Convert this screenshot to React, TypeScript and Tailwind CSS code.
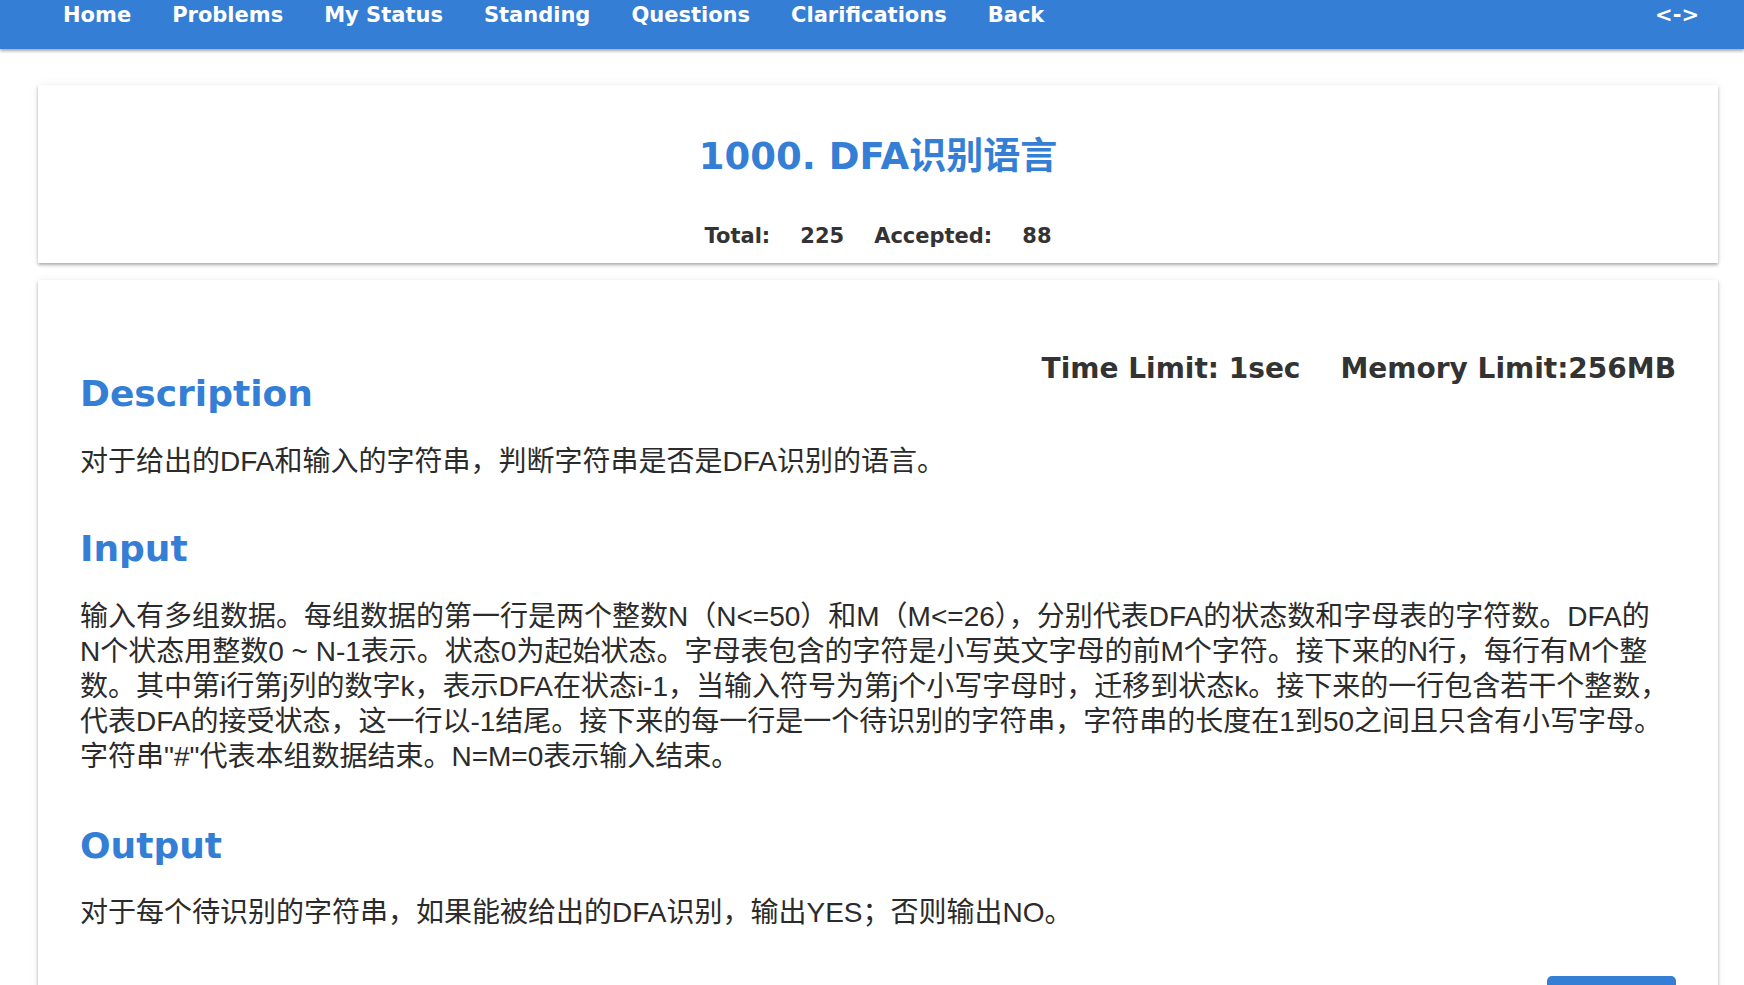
const navItems = ["Home", "Problems", "My Status", "Standing", "Questions", "Clarifications", "Back"];

const heading = "font-['DejaVu_Sans','Noto_Sans_CJK_SC',sans-serif] font-bold text-[36px] leading-[44px] text-[#347ed5]";
const body = "font-['Liberation_Sans','Noto_Sans_CJK_SC',sans-serif] text-[28px] leading-[35px] text-[#2b2b2b]";

function NavBar() {
  return (
    <nav className="h-[49px] bg-[#347ed5] shadow-[0_2px_3px_rgba(0,0,0,0.35)] flex justify-between items-start pt-[3px] pl-[63px] pr-[45px] font-['DejaVu_Sans',sans-serif] font-bold text-[21px] leading-[25px] text-white relative z-10">
      <div className="flex gap-[41px]">
        {navItems.map((item) => (
          <a key={item} href="#" className="no-underline">
            {item}
          </a>
        ))}
      </div>
      <a href="#">&lt;-&gt;</a>
    </nav>
  );
}

function TitleCard() {
  return (
    <section className="ml-[38px] mr-[26px] mt-[36px] bg-white shadow-[0_2px_3px_rgba(0,0,0,0.3),0_0_10px_rgba(0,0,0,0.06)] pt-[50px] pb-[14px] text-center">
      <h1 className="font-['DejaVu_Sans','Noto_Sans_CJK_SC',sans-serif] font-bold text-[37px] leading-[44px] text-[#347ed5]">
        1000. DFA识别语言
      </h1>
      <div className="mt-[45px] flex justify-center gap-[30px] font-['DejaVu_Sans',sans-serif] font-bold text-[21px] leading-[25px] text-[#333]">
        <span>Total:</span>
        <span>225</span>
        <span>Accepted:</span>
        <span>88</span>
      </div>
    </section>
  );
}

function ProblemBody() {
  return (
    <section className="ml-[38px] mr-[26px] mt-[17px] bg-white shadow-[0_2px_3px_rgba(0,0,0,0.3),0_0_10px_rgba(0,0,0,0.06)] pt-[72px] pl-[42px] pr-[42px] pb-[30px]">
      <div className="float-right flex gap-[40px] font-['DejaVu_Sans',sans-serif] font-bold text-[28px] leading-[34px] text-[#333]">
        <span>Time Limit: 1sec</span>
        <span>Memory Limit:256MB</span>
      </div>
      <h2 className={`${heading} pt-[20px]`}>Description</h2>
      <p className={`${body} mt-[28px]`}>对于给出的DFA和输入的字符串，判断字符串是否是DFA识别的语言。</p>

      <h2 className={`${heading} mt-[48px]`}>Input</h2>
      <p className={`${body} mt-[28px]`}>
        输入有多组数据。每组数据的第一行是两个整数N（N&lt;=50）和M（M&lt;=26），分别代表DFA的状态数和字母表的字符数。DFA的
        <br />
        N个状态用整数0 ~ N-1表示。状态0为起始状态。字母表包含的字符是小写英文字母的前M个字符。接下来的N行，每行有M个整
        <br />
        数。其中第i行第j列的数字k，表示DFA在状态i-1，当输入符号为第j个小写字母时，迁移到状态k。接下来的一行包含若干个整数，
        <br />
        代表DFA的接受状态，这一行以-1结尾。接下来的每一行是一个待识别的字符串，字符串的长度在1到50之间且只含有小写字母。
        <br />
        字符串"#"代表本组数据结束。N=M=0表示输入结束。
      </p>

      <h2 className={`${heading} mt-[50px]`}>Output</h2>
      <p className={`${body} mt-[27px]`}>对于每个待识别的字符串，如果能被给出的DFA识别，输出YES；否则输出NO。</p>

      <div className="mt-[46px] flex justify-end">
        <button aria-label="Submit" className="w-[129px] h-[40px] rounded-[5px] bg-[#347ed5]" />
      </div>
    </section>
  );
}

export default function App() {
  return (
    <div className="min-h-screen bg-white">
      <NavBar />
      <TitleCard />
      <ProblemBody />
    </div>
  );
}
